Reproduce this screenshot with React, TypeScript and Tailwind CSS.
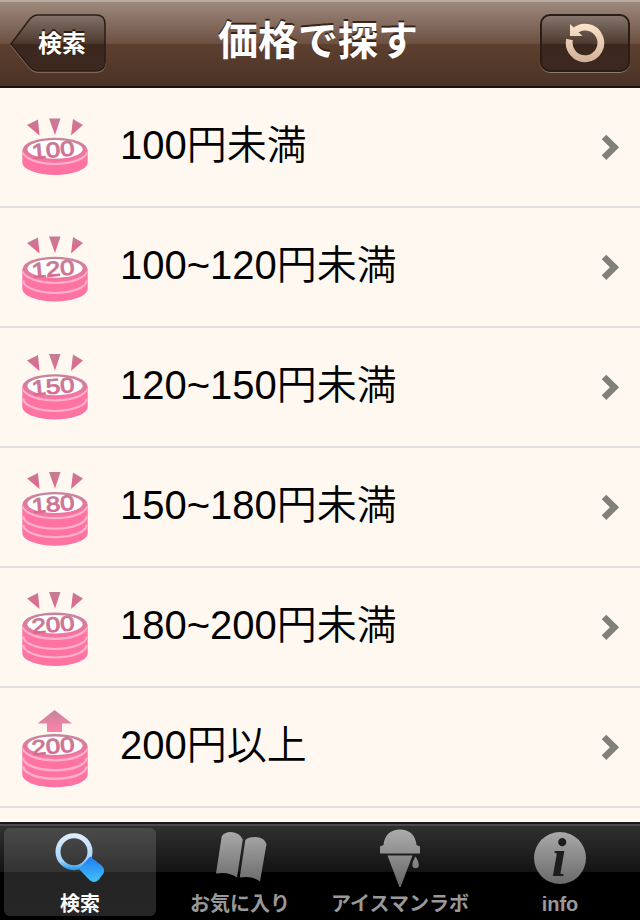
import { ReactNode } from 'react';

interface PriceRow {
  label: string;
  coin: string;
  raysTop: number;
  coinTop: number;
  coinBottom: number;
  layers: number;
  arrow?: boolean;
}

const rows: PriceRow[] = [
  { label: '100円未満', coin: '100', raysTop: 31, coinTop: 49.5, coinBottom: 87, layers: 1 },
  { label: '100~120円未満', coin: '120', raysTop: 29, coinTop: 48.5, coinBottom: 93.5, layers: 2 },
  { label: '120~150円未満', coin: '150', raysTop: 26.5, coinTop: 46, coinBottom: 91.5, layers: 2 },
  { label: '150~180円未満', coin: '180', raysTop: 24.5, coinTop: 43.7, coinBottom: 97.7, layers: 3 },
  { label: '180~200円未満', coin: '200', raysTop: 24.5, coinTop: 44.3, coinBottom: 98, layers: 3 },
  { label: '200円以上', coin: '200', raysTop: 22, coinTop: 45.8, coinBottom: 99.3, layers: 3, arrow: true },
];

function CoinIcon({ row, id }: { row: PriceRow; id: string }) {
  const { coinTop: t, coinBottom: b, raysTop: r } = row;
  const cy = t + 12.5;
  const low = b - 12.5;
  // highlight under the top face, then one between each pair of coins
  const edges = [cy + 1.5, ...Array.from({ length: row.layers - 1 }, (_, i) => low - 8.5 * (i + 1))];

  return (
    <svg className="h-[118px] w-[120px] shrink-0" viewBox="0 0 120 118" fill="none">
      <defs>
        <linearGradient id={`${id}-rim`} x1="0" y1={t} x2="0" y2={t + 25} gradientUnits="userSpaceOnUse">
          <stop offset="0" stopColor="#c5849a" />
          <stop offset="1" stopColor="#fa72a0" />
        </linearGradient>
        <linearGradient id={`${id}-num`} x1="0" y1={t + 4} x2="0" y2={t + 21} gradientUnits="userSpaceOnUse">
          <stop offset="0" stopColor="#c27f96" />
          <stop offset="1" stopColor="#d9698f" />
        </linearGradient>
        <linearGradient id={`${id}-ray`} x1="0" y1={r} x2="0" y2={r + 17} gradientUnits="userSpaceOnUse">
          <stop offset="0" stopColor="#c27f92" />
          <stop offset="1" stopColor="#e8628f" />
        </linearGradient>
        <linearGradient id={`${id}-arrow`} x1="0" y1={r} x2="0" y2={r + 22} gradientUnits="userSpaceOnUse">
          <stop offset="0" stopColor="#c5849a" />
          <stop offset="1" stopColor="#ff82ab" />
        </linearGradient>
      </defs>

      {/* stacked body */}
      <path d={`M22.3 ${cy}V${low}A32.7 12.5 0 0 0 87.7 ${low}V${cy}Z`} fill="#ff73a3" />
      {edges.map((y) => (
        <path key={y} d={`M23.3 ${y}A31.7 12.5 0 0 0 86.7 ${y}`} stroke="#ffb0ca" strokeWidth="2.2" />
      ))}

      {/* top face */}
      <ellipse cx="55" cy={cy - 0.2} rx="32.4" ry="12" fill={`url(#${id}-rim)`} />
      <ellipse cx="55" cy={cy - 0.6} rx="27.6" ry="9.3" fill="#fff" />
      <text
        x="53"
        y={t + 19.6}
        textAnchor="middle"
        textLength="43"
        lengthAdjust="spacingAndGlyphs"
        transform={`rotate(-5 53 ${cy})`}
        className="font-['Liberation_Sans'] text-[21px]"
        fill={`url(#${id}-num)`}
        stroke={`url(#${id}-num)`}
        strokeWidth="0.9"
      >
        {row.coin}
      </text>

      {row.arrow ? (
        <path d={`M54.5 ${r}L72 ${r + 13.5}H62V${r + 22}H47V${r + 13.5}H37.5Z`} fill={`url(#${id}-arrow)`} />
      ) : (
        <g fill={`url(#${id}-ray)`}>
          <path d={`M27 ${r + 6}L38 ${r + 0.5}L39.5 ${r + 16.5}Z`} />
          <path d={`M49 ${r - 0.5}H60.5L55 ${r + 16}Z`} />
          <path d={`M73 ${r}L83 ${r + 6}L71 ${r + 16.5}Z`} />
        </g>
      )}
    </svg>
  );
}

function SearchIcon() {
  return (
    <svg className="h-16 w-20" viewBox="0 0 80 64" fill="none">
      <defs>
        <linearGradient id="lens" x1="0" y1="6" x2="0" y2="43" gradientUnits="userSpaceOnUse">
          <stop offset="0" stopColor="#e4effc" />
          <stop offset=".75" stopColor="#a5d5fa" />
          <stop offset=".97" stopColor="#2e9ff0" />
        </linearGradient>
        <linearGradient id="handle" x1="0" y1="30" x2="0" y2="56" gradientUnits="userSpaceOnUse">
          <stop offset="0" stopColor="#1d7df0" />
          <stop offset="1" stopColor="#45c4fb" />
        </linearGradient>
      </defs>
      <circle cx="34" cy="24.7" r="16" stroke="url(#lens)" strokeWidth="5" />
      <path d="M50 29.5L61 38Q66 42 63 47L58.5 53Q54 57 49.5 53L39 42Z" fill="url(#handle)" />
    </svg>
  );
}

function GreyGradient({ id }: { id: string }) {
  return (
    <linearGradient id={id} x1="0" y1="2" x2="0" y2="60" gradientUnits="userSpaceOnUse">
      <stop offset="0" stopColor="#adadad" />
      <stop offset="1" stopColor="#666" />
    </linearGradient>
  );
}

function BookIcon() {
  return (
    <svg className="h-16 w-20" viewBox="0 0 80 64">
      <defs>
        <GreyGradient id="book" />
      </defs>
      <g fill="url(#book)">
        <path d="M21.7 9.5Q24 5 31 5Q40 5.5 42.8 12.5L37 50.5Q29 44.5 16 46.5Z" />
        <path d="M45.3 13Q48 9.8 56 10Q65 11 66.5 17L60 54.5Q53 48.5 39.7 50.5Z" />
      </g>
    </svg>
  );
}

function IceCreamIcon() {
  return (
    <svg className="h-16 w-20" viewBox="0 0 80 64">
      <defs>
        <GreyGradient id="ice" />
      </defs>
      <g fill="url(#ice)">
        <path d="M23.5 18C24.5 7.5 31 2.5 40 2.5S55.5 7.5 56.5 18L60 19.5V26.5H20V19.5Z" />
        <path d="M27.5 28.5H52.5L40.6 60H39.4Z" />
        <path d="M55.5 29.5C57.5 32.5 58.8 35 58.8 38A3.2 3.2 0 0 1 52.4 38C52.4 35 53.8 32.5 55.5 29.5Z" />
      </g>
    </svg>
  );
}

function InfoIcon() {
  return (
    <svg className="h-16 w-20" viewBox="0 0 80 64">
      <defs>
        <GreyGradient id="info" />
      </defs>
      <circle cx="40" cy="31" r="26" fill="url(#info)" />
      <text x="39" y="48.5" textAnchor="middle" className="font-['Liberation_Serif'] text-[54px] font-bold italic" fill="#1d1d1d">
        i
      </text>
    </svg>
  );
}

const tabs: { label: string; icon: ReactNode }[] = [
  { label: '検索', icon: <SearchIcon /> },
  { label: 'お気に入り', icon: <BookIcon /> },
  { label: 'アイスマンラボ', icon: <IceCreamIcon /> },
  { label: 'info', icon: <InfoIcon /> },
];

function Header() {
  return (
    <header className="grid h-[88px] shrink-0 grid-cols-[1fr_auto_1fr] items-start border-b-2 border-[#1c110c] bg-[linear-gradient(#b9aca3_0,#b9aca3_2px,#9d897d_2px,#6c5041_44px,#5d402f_44px,#4b3326_86px)] pt-[14px]">
      <button className="relative ml-[10px] h-[59px] w-24">
        <svg className="absolute inset-0 h-[59px] w-24" viewBox="0 0 96 59" fill="none">
          <defs>
            <linearGradient id="back" x1="0" y1="0" x2="0" y2="58" gradientUnits="userSpaceOnUse">
              <stop offset="0" stopColor="#85756c" />
              <stop offset=".51" stopColor="#4c382d" />
              <stop offset=".52" stopColor="#3b271d" />
              <stop offset="1" stopColor="#3c281e" />
            </linearGradient>
          </defs>
          <path d="M1 31L19 53Q23 58 28 58H86Q95 58 95 49" stroke="#8d7a6e" strokeWidth="1.5" />
          <path d="M1 30L19 6Q23 1 28 1H86Q95 1 95 10V48Q95 57 86 57H28Q23 57 19 52Z" fill="url(#back)" stroke="#2b1d16" strokeWidth="1.5" />
        </svg>
        <span className="relative ml-[8px] block text-center text-[24px] leading-[55px] font-bold text-white [text-shadow:0_-2px_0_#2d1d15]">検索</span>
      </button>
      <h1 className="-ml-1 text-[40px] leading-[54px] font-bold text-white [text-shadow:0_-2px_0_#382419]">価格で探す</h1>
      <button className="mr-[10px] flex h-[58px] w-[90px] items-center justify-center justify-self-end rounded-[10px] border-2 border-[#2b1d16] bg-[linear-gradient(#85756c_0,#4c382d_28px,#3b271d_28px,#3c281e_100%)] shadow-[0_1px_0_#8d7a6e]">
        <svg className="size-10" viewBox="0 0 40 40" fill="none">
          <defs>
            <linearGradient id="reload" x1="0" y1="1" x2="0" y2="39" gradientUnits="userSpaceOnUse">
              <stop offset="0" stopColor="#fae3c8" />
              <stop offset="1" stopColor="#d3b09a" />
            </linearGradient>
          </defs>
          <path d="M4.6 16.5A15.8 15.8 0 1 0 9 8.6" stroke="url(#reload)" strokeWidth="6.8" />
          <path d="M5 1V13H17.5Z" fill="url(#reload)" />
        </svg>
      </button>
    </header>
  );
}

export default function App() {
  return (
    <div className="flex h-[920px] w-[640px] flex-col overflow-hidden bg-[#fff8f1] font-['Liberation_Sans','Noto_Sans_CJK_JP',sans-serif]">
      <Header />

      <main className="min-h-0 flex-1 overflow-hidden">
        {rows.map((row, i) => (
          <div key={row.label} className="flex h-[120px] border-b-2 border-[#e0e0e0]">
            <CoinIcon row={row} id={`coin${i}`} />
            <span className="flex-1 text-[40px] leading-[114px] font-[350] text-black">{row.label}</span>
            <svg className="h-[118px] w-10" viewBox="0 0 40 118" fill="none">
              <path d="M4 49L14.5 59.3L4 69.6" stroke="#80807b" strokeWidth="6.5" />
            </svg>
          </div>
        ))}
      </main>

      <nav className="flex h-[98px] shrink-0 bg-[linear-gradient(#17171a_0,#17171a_2px,#4b4b4b_2px,#4b4b4b_4px,#303030_4px,#131313_50px,#000_50px)] pt-[5px]">
        {tabs.map((tab, i) => (
          <div key={tab.label} className="relative flex w-40 flex-col items-center">
            {i === 0 && (
              <div className="absolute top-[1px] left-1 h-[88px] w-[152px] rounded-[6px] bg-[linear-gradient(#4a4a4a_0,#333_44px,#242424_44px,#262626_100%)]" />
            )}
            <div className="relative">{tab.icon}</div>
            <span className={`relative text-[20px] leading-[27px] font-bold whitespace-nowrap ${i === 0 ? 'text-white' : 'text-[#999]'}`}>
              {tab.label}
            </span>
          </div>
        ))}
      </nav>
    </div>
  );
}
